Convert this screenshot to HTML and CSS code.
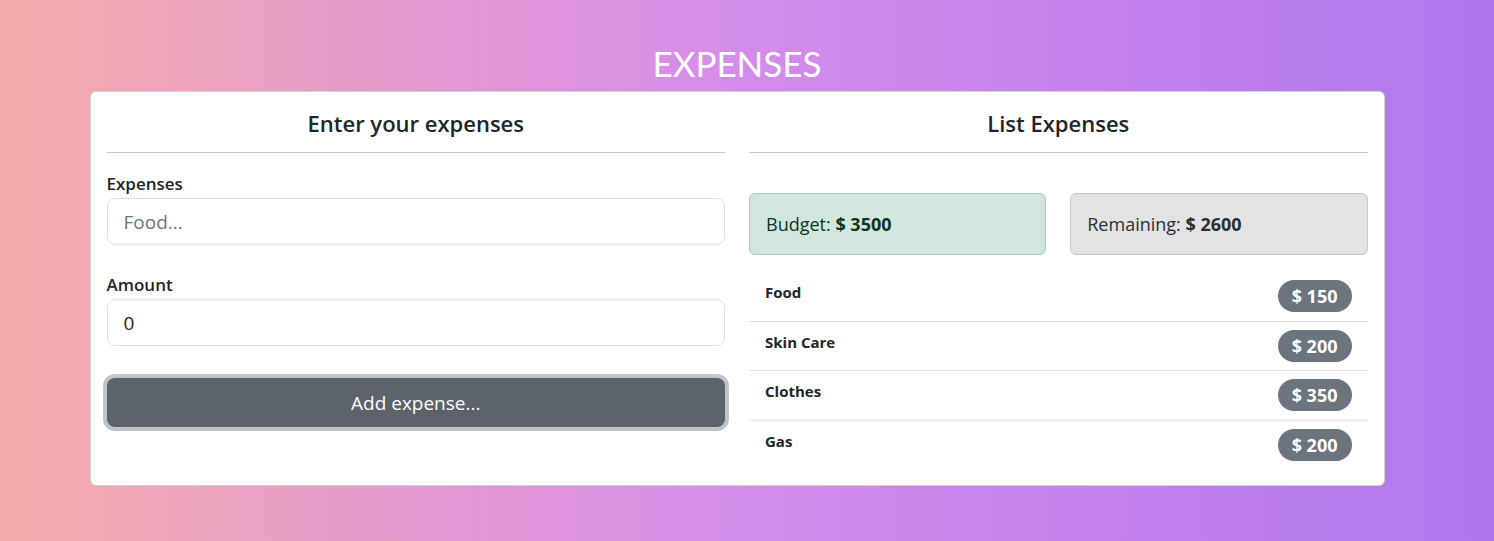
FILE: index.html
```html
<!DOCTYPE html>
<html lang="en">
<head>
  <meta charset="UTF-8" />
  <title>Expenses</title>
  <link rel="stylesheet" href="styles.css">
</head>
<body>
  <h1 class="title">EXPENSES</h1>

  <div class="card">
    <!-- Left: form -->
    <div class="col">
      <h3 class="col-title">Enter your expenses</h3>
      <hr>
      <label class="label" for="expense">Expenses</label>
      <input id="expense" class="field" placeholder="Food...">
      <label class="label label-gap" for="amount">Amount</label>
      <input id="amount" class="field" type="number" value="0">
      <button class="add-btn">Add expense...</button>
    </div>

    <!-- Right: list -->
    <div class="col">
      <h3 class="col-title">List Expenses</h3>
      <hr>
      <div class="totals">
        <div class="alert alert-budget">Budget: <b>$ 3500</b></div>
        <div class="alert alert-remain">Remaining: <b>$ 2600</b></div>
      </div>
      <ul class="list">
        <li class="item"><span class="item-name">Food</span><span class="badge">$ 150</span></li>
        <li class="item"><span class="item-name">Skin Care</span><span class="badge">$ 200</span></li>
        <li class="item"><span class="item-name">Clothes</span><span class="badge">$ 350</span></li>
        <li class="item"><span class="item-name">Gas</span><span class="badge">$ 200</span></li>
      </ul>
    </div>
  </div>
</body>
</html>
```

FILE: styles.css
```css
* {
  box-sizing: border-box;
}

body {
  margin: 0;
  padding: 0 20px 0 0;
  min-height: 541px;
  font-family: 'Open Sans', sans-serif;
  color: #212529;
  background: linear-gradient(to right, #f5acab 0%, #d48cec 50%, #b077ee 100%);
}

.title {
  margin: 0;
  padding-top: 42px;
  height: 91px;
  text-align: center;
  color: #fff;
  font-family: 'Lato', sans-serif;
  font-weight: 400;
  font-size: 35px;
  line-height: 42px;
}

.card {
  width: 1295px;
  margin: 0 auto;
  padding: 16px;
  background: #fff;
  border: 1px solid rgba(0, 0, 0, 0.175);
  border-radius: 6px;
  display: grid;
  grid-template-columns: 1fr 1fr;
  gap: 24px;
}

.col-title {
  margin: 0;
  text-align: center;
  font-size: 22px;
  font-weight: 600;
  line-height: 30px;
}

hr {
  margin: 14px 0 19px;
  border: 0;
  border-top: 1px solid #c8c8c8;
}

.label {
  display: block;
  font-size: 17px;
  font-weight: 600;
  line-height: 24px;
  margin-bottom: 2px;
}

.label-gap {
  margin-top: 28px;
}

.field {
  display: block;
  width: 100%;
  height: 47px;
  padding: 0 16px;
  font-family: inherit;
  font-size: 19px;
  color: #212529;
  border: 1px solid #dee2e6;
  border-radius: 8px;
}

.field::placeholder {
  color: #6c757d;
}

.add-btn {
  display: block;
  width: 100%;
  height: 49px;
  margin-top: 32px;
  font-family: inherit;
  font-size: 19px;
  color: #fff;
  background: #5c636a;
  border: 0;
  border-radius: 8px;
  box-shadow: 0 0 0 4px rgba(130, 138, 145, 0.5);
  cursor: pointer;
}

.totals {
  display: grid;
  grid-template-columns: 1fr 1fr;
  gap: 24px;
  margin-top: 40px;
}

.alert {
  height: 62px;
  padding: 16px;
  font-size: 18px;
  line-height: 28px;
  border: 1px solid;
  border-radius: 6px;
}

.alert-budget {
  background: #d1e7dd;
  border-color: #a3cfbb;
  color: #0a3622;
}

.alert-remain {
  background: #e2e3e5;
  border-color: #c4c8cb;
  color: #2b2f32;
}

.list {
  list-style: none;
  margin: 17px 0 0;
  padding: 0;
}

.item {
  display: flex;
  justify-content: space-between;
  align-items: flex-start;
  padding: 8px 16px 8.5px;
  border-bottom: 1px solid #dee2e6;
}

.item:last-child {
  border-bottom: 0;
}

.item-name {
  font-size: 15px;
  font-weight: 700;
  line-height: 24px;
}

.badge {
  height: 32px;
  padding: 0 14px;
  font-size: 18px;
  font-weight: 700;
  line-height: 32px;
  color: #fff;
  background: #6c757d;
  border-radius: 16px;
}
```
